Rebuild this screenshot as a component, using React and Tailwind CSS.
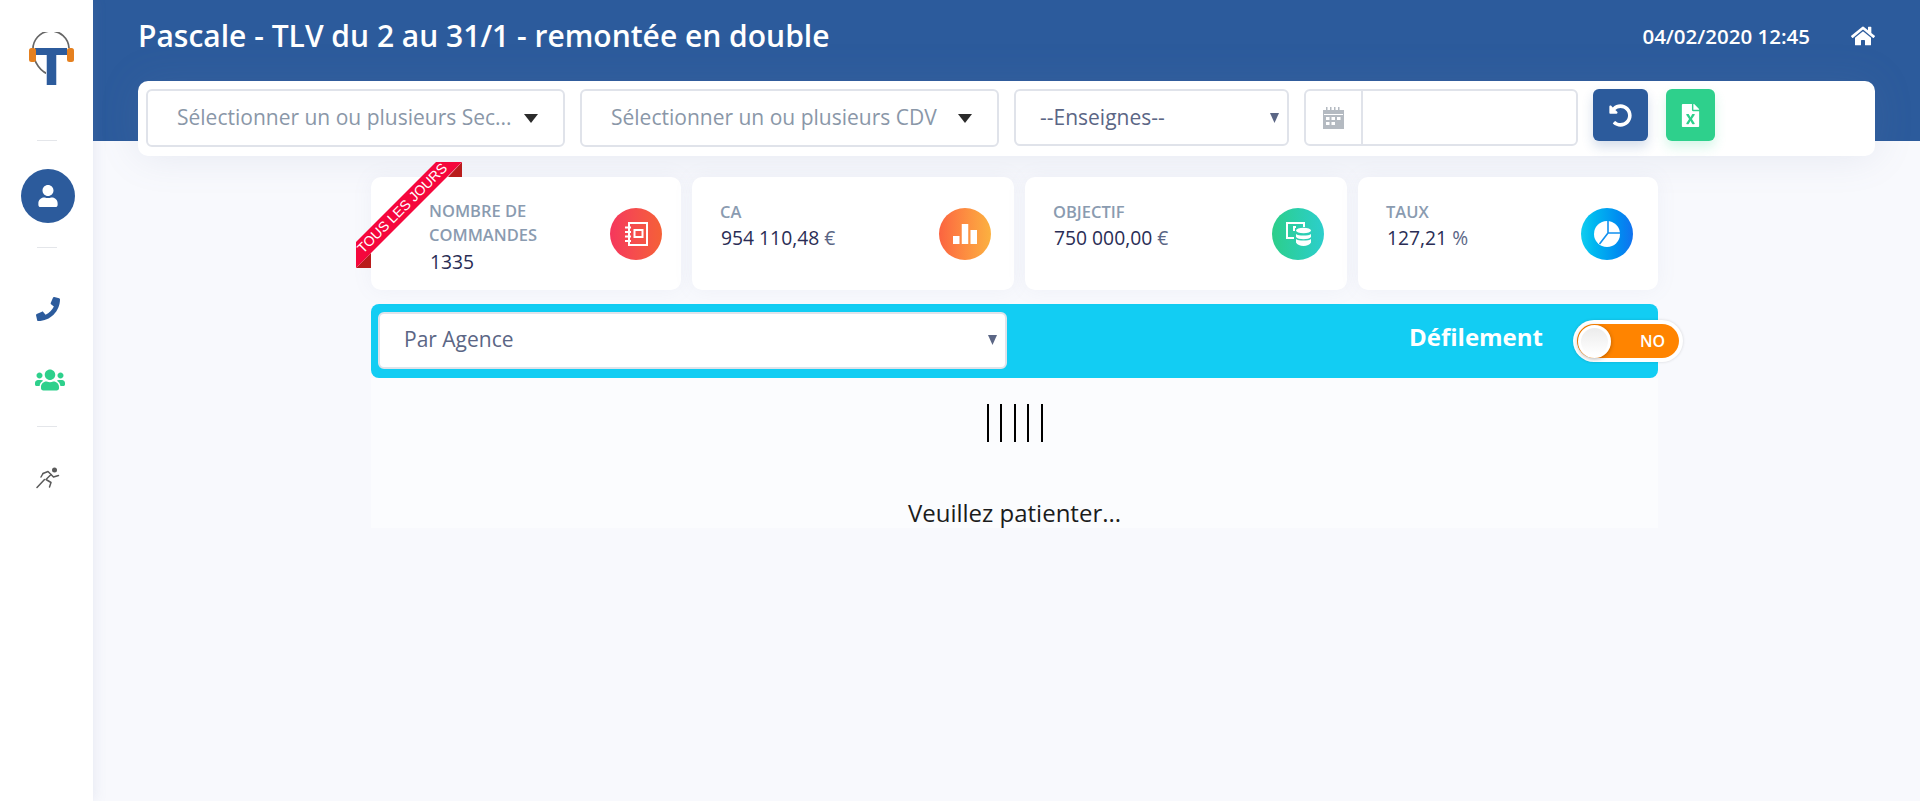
import React from "react";
import { FaUser, FaPhone, FaUsers, FaHome, FaUndoAlt, FaFileExcel } from "react-icons/fa";

const Caret = () => (
  <svg width="16" height="9" viewBox="0 0 16 9" className="shrink-0"><path d="M1 0h14L8 9z" fill="#2b2b2b" /></svg>
);
const SmallCaret = () => (
  <svg width="9" height="10" viewBox="0 0 9 10" className="shrink-0"><path d="M0 0h9L4.5 10z" fill="#5b6685" /></svg>
);

const Logo = () => (
  <svg width="45" height="53" viewBox="0 0 45 53">
    <path d="M40 16A18 18 0 0 0 4 18C4 30 12 41 22 43" fill="none" stroke="#666" strokeWidth="1.7" />
    <circle cx="22" cy="43" r="2.4" fill="#666" />
    <rect x="6" y="16" width="32" height="7" fill="#2c5b9c" />
    <rect x="18" y="16" width="9" height="37" fill="#2c5b9c" />
    <path d="M27 23v30h1V23zM17 23v30h1V23z" fill="#c5d2e6" />
    <rect x="0" y="16" width="7" height="14" rx="2.5" fill="#e5801f" />
    <rect x="38" y="16" width="7" height="14" rx="2.5" fill="#e5801f" />
  </svg>
);

const Runner = () => (
  <svg width="24" height="22" viewBox="0 0 24 22" fill="none" stroke="#5a5a5a" strokeWidth="1.5" strokeLinecap="round" strokeLinejoin="round">
    <circle cx="18.5" cy="3" r="2.5" fill="#5a5a5a" stroke="none" />
    <path d="M7 6.500l5-2 3 3-5 5 5 3-1.500 4.500" />
    <path d="M8.500 12.500L1 20.500" />
    <path d="M15 7.500l2.500 2.500 5-1.500" />
    <path d="M7 6.500L5 10" />
  </svg>
);

const CalendarIcon = () => (
  <svg width="21" height="22" viewBox="0 0 21 22" fill="#b4bac1">
    <path d="M0 3h21v19H0z" />
    <path d="M3 0h1.500v4H3zM7 0h1.500v4H7zM11 0h1.500v4H11zM15 0h1.500v4H15z" />
    <path d="M1 7h19v1H1z" fill="#fff" />
    <path d="M3 10h3.500v3H3zM8.500 10h3.500v3H8.500zM14 10h3.500v3H14zM3 15h3.500v3H3zM8.500 15h3.500v3H8.500z" fill="#fff" />
  </svg>
);

const NotebookIcon = () => (
  <svg width="23" height="24" viewBox="0 0 23 24" fill="none" stroke="#fff" strokeWidth="2">
    <rect x="4" y="1" width="18" height="22" />
    <rect x="9.500" y="8" width="8" height="7" />
    <path d="M0 5.500h6M0 10h6M0 14.500h6M0 19h6" />
  </svg>
);
const BarsIcon = () => (
  <svg width="24" height="20" viewBox="0 0 24 20" fill="#fff">
    <rect x="0" y="12" width="6.500" height="8" />
    <rect x="8.750" y="0" width="6.500" height="20" />
    <rect x="17.500" y="6" width="6.500" height="14" />
  </svg>
);
const DataIcon = () => (
  <svg width="25" height="24" viewBox="0 0 25 24" fill="#fff">
    <path d="M0 0h19v5h-2V2H2v13h6v2H0z" />
    <path d="M7 4h3v2H9v3H7z" />
    <ellipse cx="17.500" cy="8.500" rx="7.500" ry="2.800" />
    <path d="M10 12c2 2 13 2 15 0v3c-2 3-13 3-15 0zM10 17c2 2 13 2 15 0v3.500c-2 4.500-13 4.500-15 0z" />
  </svg>
);
const PieIcon = () => (
  <svg width="26" height="26" viewBox="0 0 26 26">
    <circle cx="13" cy="13" r="13" fill="#fff" />
    <path d="M14 0v12h12M14 12L5.500 23" fill="none" stroke="#1190ef" strokeWidth="1.600" />
  </svg>
);

const Card = ({ width, label, value, unit, grad, icon, pl, iconMr, top }) => (
  <div className={`${width} h-[113px] bg-white rounded-[10px] flex items-center justify-between shadow-[0_0_20px_rgba(130,145,180,0.08)]`}>
    <div className={`${pl} ${top}`}>
      <div className="text-[16.500px] leading-[24.500px] font-semibold text-[#8a9bb0]">{label}</div>
      <div className="text-[19.300px] leading-[27px] font-normal text-[#2a2d55] pl-[1px]">
        {value}
        {unit && <span className="text-[#5b6685]"> {unit}</span>}
      </div>
    </div>
    <div className={`w-[52px] h-[52px] rounded-full ${grad} ${iconMr} flex items-center justify-center shrink-0`}>{icon}</div>
  </div>
);

export default function App() {
  return (
    <div className="flex min-h-[801px] bg-[#f8f9fd] font-['Open_Sans',sans-serif]">
      <aside className="w-[93px] h-[801px] shrink-0 bg-white flex flex-col items-center shadow-[2px_0_12px_rgba(120,135,170,0.12)] z-10">
        <div className="h-[141px] w-full pt-[32px] pl-[29px]"><Logo /></div>
        <div className="w-[20px] h-px bg-[#e4e6ea] -mt-px" />
        <div className="mt-[28px] ml-[3px] w-[54px] h-[54px] rounded-full bg-[#2c5b9c] flex items-center justify-center text-white">
          <FaUser size={22} />
        </div>
        <div className="w-[20px] h-px bg-[#e4e6ea] mt-[24px]" />
        <div className="mt-[49px] ml-[3px] h-[24px] flex items-center text-[#2c5b9c]">
          <FaPhone size={24} />
        </div>
        <div className="mt-[47px] h-[24px] flex items-center text-[#2ed08c] pl-[6px]">
          <FaUsers size={30} />
        </div>
        <div className="w-[20px] h-px bg-[#e4e6ea] mt-[34px]" />
        <div className="mt-[40px] ml-[3px]"><Runner /></div>
      </aside>

      <main className="flex-1 min-w-0">
        <header className="h-[141px] bg-[#2c5b9c] pl-[45px] pr-[45px] pt-[15px] flex justify-between items-start">
          <h1 className="text-[30px] leading-[41px] font-semibold text-white">Pascale - TLV du 2 au 31/1 - remontée en double</h1>
          <div className="flex items-center mt-[6px]">
            <span className="text-[20.500px] leading-[30px] font-semibold text-white mr-[1px]">04/02/2020 12:45</span>
            <FaHome size={24} className="ml-[40px] text-white" />
          </div>
        </header>

        <div className="ml-[45px] w-[1737px] h-[75px] -mt-[60px] bg-white rounded-[10px] flex items-start pt-[8px] pl-[8px] shadow-[0_0_40px_rgba(110,125,165,0.14)] relative">
          <div className="w-[419px] h-[58px] border-2 border-[#e0e3ea] rounded-[6px] flex items-center pl-[29px] pr-[24px] justify-between text-[21px] text-[#8a97a8]">
            <span>Sélectionner un ou plusieurs Sec...</span><Caret />
          </div>
          <div className="w-[419px] h-[58px] ml-[15px] border-2 border-[#e0e3ea] rounded-[6px] flex items-center pl-[29px] pr-[24px] justify-between text-[21px] text-[#8a97a8]">
            <span>Sélectionner un ou plusieurs CDV</span><Caret />
          </div>
          <div className="w-[275px] h-[57px] ml-[15px] border-2 border-[#e0e3ea] rounded-[6px] flex items-center pl-[24px] pr-[8px] justify-between text-[21px] text-[#5b6685]">
            <span>--Enseignes--</span><SmallCaret />
          </div>
          <div className="w-[274px] h-[57px] ml-[15px] border-2 border-[#e0e3ea] rounded-[6px] flex">
            <div className="w-[57px] border-r-2 border-[#e0e3ea] flex items-center justify-center">
              <CalendarIcon />
            </div>
          </div>
          <div className="w-[55px] h-[52px] ml-[15px] bg-[#2c5b9c] rounded-[6px] flex items-center justify-center text-white shadow-[0_6px_12px_rgba(44,91,156,0.2)]">
            <FaUndoAlt size={23} />
          </div>
          <div className="w-[49px] h-[52px] ml-[18px] bg-[#2ed08c] rounded-[6px] flex items-center justify-center text-white shadow-[0_6px_12px_rgba(46,208,140,0.2)]">
            <FaFileExcel size={23} />
          </div>
        </div>

        <div className="ml-[278px] w-[1287px] mt-[21px]">
          <div className="flex gap-[11px] relative">
            <Card width="w-[310px]" label={<>NOMBRE DE<br />COMMANDES</>} value="1335" pl="pl-[58px]" iconMr="mr-[19px]" top="pt-[6px]" grad="bg-gradient-to-r from-[#f5365c] to-[#f56036]" icon={<NotebookIcon />} />
            <Card width="w-[322px]" label="CA" value="954 110,48" unit="€" pl="pl-[28px]" iconMr="mr-[23px]" top="-mt-[16px]" grad="bg-gradient-to-r from-[#fb6340] to-[#fbb140]" icon={<BarsIcon />} />
            <Card width="w-[322px]" label="OBJECTIF" value="750 000,00" unit="€" pl="pl-[28px]" iconMr="mr-[23px]" top="-mt-[16px]" grad="bg-gradient-to-r from-[#2dce89] to-[#2dcecc]" icon={<DataIcon />} />
            <Card width="w-[300px]" label="TAUX" value="127,21" unit="%" pl="pl-[28px]" iconMr="mr-[25px]" top="-mt-[16px]" grad="bg-gradient-to-r from-[#11cdef] to-[#1171ef]" icon={<PieIcon />} />

            <div className="absolute left-[-15px] top-[-15px] w-[106px] h-[106px] pointer-events-none">
              <svg width="106" height="106" viewBox="0 0 106 106" className="absolute inset-0">
                <path d="M106 0v15H92zM0 106l15-15v15z" fill="#b91c1c" />
                <path d="M80 0h26L0 106V80z" fill="#f5073c" />
              </svg>
              <span className="absolute left-[46px] top-[46px] -translate-x-1/2 -translate-y-1/2 -rotate-45 whitespace-nowrap font-['Liberation_Sans',sans-serif] text-[14px] leading-none text-white">TOUS LES JOURS</span>
            </div>
          </div>

          <div className="mt-[14px] h-[74px] bg-[#12cdf3] rounded-[8px] flex items-center pl-[7px]">
            <div className="w-[629px] h-[57px] mb-[2px] bg-white border-2 border-[#e0e3ea] rounded-[6px] flex items-center justify-between pl-[24px] pr-[8px] text-[21px] text-[#5b6685]">
              <span>Par Agence</span><SmallCaret />
            </div>
            <span className="ml-auto text-[24px] font-bold text-white -mt-[8px]">Défilement</span>
            <div className="ml-[30px] -mr-[25px] w-[110px] h-[42px] bg-white rounded-full p-[4px] shadow-[0_0_3px_rgba(0,0,0,0.15)]">
              <div className="h-full bg-[#ff8400] rounded-full flex items-center justify-between pl-[1px] pr-[14px]">
                <div className="w-[33px] h-[33px] rounded-full bg-gradient-to-b from-[#ececec] to-white border-[3px] border-white shadow-[0_1px_4px_rgba(0,0,0,0.3)]" />
                <span className="text-[16px] font-semibold text-white">NO</span>
              </div>
            </div>
          </div>

          <div className="h-[150px] bg-[#fbfcfe] flex flex-col items-center">
            <div className="flex gap-[11.500px] mt-[26px] h-[38px]">
              {[0, 1, 2, 3, 4].map((i) => (
                <div key={i} className="w-[2px] h-full bg-black" />
              ))}
            </div>
            <div className="mt-[56px] text-[24px] leading-[30px] text-[#1c1c1c]">Veuillez patienter...</div>
          </div>
        </div>
      </main>
    </div>
  );
}
